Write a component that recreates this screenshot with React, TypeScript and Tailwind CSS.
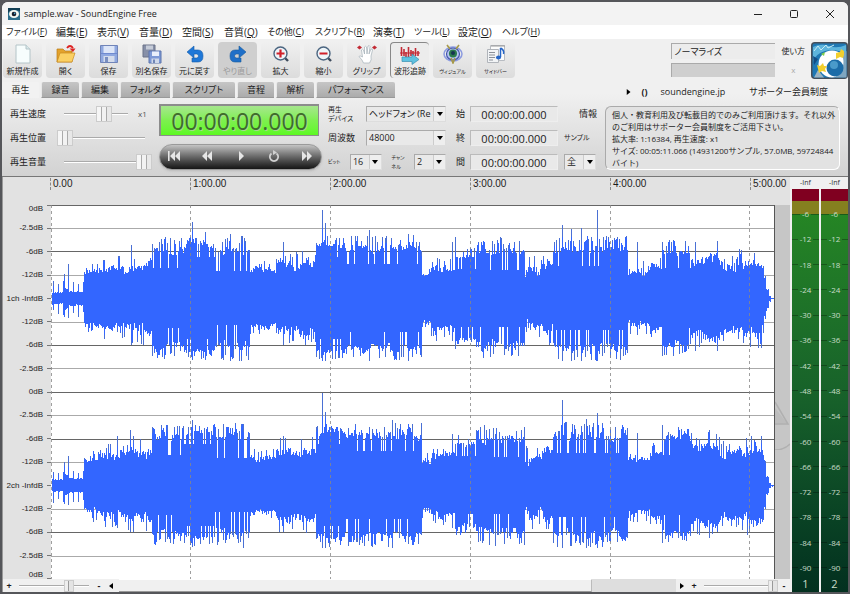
import React from "react";
import clsx from "clsx";

const menus = [
  { text: "ファイル", hotkey: "F", width: "w-[50px]", kana: true },
  { text: "編集", hotkey: "E", width: "w-[41px]" },
  { text: "表示", hotkey: "V", width: "w-[42px]" },
  { text: "音量", hotkey: "D", width: "w-[43px]" },
  { text: "空間", hotkey: "S", width: "w-[42px]" },
  { text: "音質", hotkey: "Q", width: "w-[43px]" },
  { text: "その他", hotkey: "C", width: "w-[48px]", kana: true },
  { text: "スクリプト", hotkey: "R", width: "w-[58px]", kana: true },
  { text: "演奏", hotkey: "T", width: "w-[41px]" },
  { text: "ツール", hotkey: "L", width: "w-[44px]", kana: true },
  { text: "設定", hotkey: "O", width: "w-[44px]" },
  { text: "ヘルプ", hotkey: "H", width: "w-[44px]", kana: true },
];

const tabs = [
  { text: "再生", width: "w-[37px]" },
  { text: "録音", width: "w-[38px]" },
  { text: "編集", width: "w-[37px]" },
  { text: "フォルダ", width: "w-[50px]" },
  { text: "スクリプト", width: "w-[63px]" },
  { text: "音程", width: "w-[37px]" },
  { text: "解析", width: "w-[38px]" },
  { text: "パフォーマンス", width: "w-[79px]" },
];

const tools = [
  { text: "新規作成", icon: <NewIcon /> },
  { text: "開く", icon: <OpenIcon /> },
  { text: "保存", icon: <SaveIcon /> },
  { text: "別名保存", icon: <SaveAsIcon /> },
  { text: "元に戻す", icon: <UndoIcon /> },
  { text: "やり直し", icon: <RedoIcon />, disabled: true },
  { text: "拡大", icon: <ZoomIcon plus /> },
  { text: "縮小", icon: <ZoomIcon /> },
  { text: "グリップ", icon: <GripIcon /> },
  { text: "波形追跡", icon: <TrackIcon />, pressed: true },
  { text: "ヴィジュアル", icon: <VisualIcon />, small: true },
  { text: "サイドバー", icon: <SidebarIcon />, small: true },
];

const axisLabels = [
  "0dB", "-2.5dB", "-6dB", "-12dB", "1ch -InfdB", "-12dB", "-6dB", "-2.5dB",
  "0dB", "-2.5dB", "-6dB", "-12dB", "2ch -InfdB", "-12dB", "-6dB", "-2.5dB", "0dB",
];

const rulerLabels = ["0.00", "1:00.00", "2:00.00", "3:00.00", "4:00.00", "5:00.00"];

const meterLabels = [-6, -12, -18, -24, -30, -36, -42, -48, -54, -60, -66, -72, -78, -84, -90];

function App() {
  return (
    <div className="h-screen bg-[#55565a] px-0.5 pt-0.5 pb-0.5 text-[#1c1c1c] font-['Open_Sans','Noto_Sans_CJK_JP',sans-serif] [font-feature-settings:'palt']">
      <div className="flex h-full flex-col overflow-hidden rounded-t-md bg-[#f0f0f0]">
        <TitleBar />
        <MenuBar />
        <div className="bg-linear-to-b from-[#f0f0f0] from-40% to-[#d2d2d2]">
          <Toolbar />
          <TabBar />
          <PlaybackPanel />
        </div>
        <div className="flex min-h-0 flex-1 border-t border-[#777]">
          <div className="flex min-w-0 flex-1 flex-col border-l border-[#999]">
            <Editor />
            <BottomBar />
          </div>
          <Meters />
        </div>
      </div>
    </div>
  );
}

export default App;

function TitleBar() {
  return (
    <header className="flex h-[23px] shrink-0 items-center bg-[#f3f3f3] pl-1.5">
      <svg viewBox="0 0 12 12" className="size-3">
        <rect width="12" height="12" fill="#2b6f8c" />
        <path d="M0 0h12v3L9 2 3 2 0 5z" fill="#123f55" />
        <ellipse cx="6" cy="6" rx="5" ry="4" fill="#f4f8f2" />
        <circle cx="6" cy="6" r="2.3" fill="#16202c" />
        <circle cx="6.6" cy="5.4" r="0.8" fill="#4aa3d0" />
      </svg>
      <h1 className="ml-1 text-[9px] whitespace-nowrap">sample.wav - SoundEngine Free</h1>
      <div className="ml-auto flex items-center">
        <button aria-label="最小化" className="flex h-5 w-9 items-center justify-center">
          <svg viewBox="0 0 10 10" className="size-2.5">
            <path d="M1 5.5h8" stroke="#222" />
          </svg>
        </button>
        <button aria-label="最大化" className="flex h-5 w-9 items-center justify-center">
          <svg viewBox="0 0 10 10" className="size-2.5">
            <rect x="1.5" y="1.5" width="7" height="7" rx="1" fill="none" stroke="#222" />
          </svg>
        </button>
        <button aria-label="閉じる" className="flex h-5 w-9 items-center justify-center">
          <svg viewBox="0 0 10 10" className="size-2.5">
            <path d="M1 1l8 8M9 1L1 9" stroke="#222" />
          </svg>
        </button>
      </div>
    </header>
  );
}

function MenuBar() {
  return (
    <nav className="flex h-3.5 shrink-0 items-center bg-white pl-1">
      {menus.map((menu) => (
        <button
          key={menu.text}
          className={clsx("text-left leading-3 whitespace-nowrap", menu.kana ? "text-[9px]" : "text-[10px]", menu.width)}
        >
          {menu.text}(<span className="underline">{menu.hotkey}</span>)
        </button>
      ))}
    </nav>
  );
}

function Toolbar() {
  return (
    <div className="flex h-[42px] items-center gap-1 pl-px">
      {tools.map((tool) => (
        <button
          key={tool.text}
          disabled={tool.disabled}
          className={clsx(
            "flex h-9 w-[39px] shrink-0 flex-col items-center justify-between rounded-sm pt-0.5 pb-px",
            tool.disabled && "bg-[#cfcfcf] text-[#999]",
            tool.pressed && "border-t border-l border-[#888] bg-[#ececec]",
            !tool.disabled && !tool.pressed && "bg-linear-to-b from-[#f0f0f0] to-[#dcdcdc]"
          )}
        >
          {tool.icon}
          <span className={clsx("leading-3 whitespace-nowrap", tool.small ? "text-[5px]" : "text-[8px]")}>{tool.text}</span>
        </button>
      ))}
      <div className="ml-auto flex items-center gap-1.5">
        <div className="flex flex-col gap-1">
          <input
            aria-label="処理"
            defaultValue="ノーマライズ"
            className="h-4 w-[104px] border-t border-l border-[#aaa] bg-[#ececec] pl-0.5 text-[9px]"
          />
          <div className="h-3.5 w-[104px] border-t border-l border-[#aaa] bg-[#cfcfcf]" />
        </div>
        <div className="flex flex-col items-center gap-1 text-[8px]">
          <button className="h-4 leading-4">使い方</button>
          <button className="h-3.5 leading-3 text-[#aaa]">x</button>
        </div>
        <Logo />
      </div>
    </div>
  );
}

function TabBar() {
  return (
    <div className="flex h-[17px] items-end">
      <div role="tablist" className="flex gap-0.5">
        {tabs.map((tab, i) => (
          <button
            key={tab.text}
            role="tab"
            aria-selected={i === 0}
            className={clsx(
              "flex h-4 items-center justify-center rounded-t-xs text-[9px] leading-3 whitespace-nowrap",
              tab.width,
              i === 0
                ? "bg-[#f2f2f2]"
                : "border-b border-l border-b-[#999] border-l-[#e8e8e8] bg-linear-to-b from-[#c6c6c6] to-[#ababab]"
            )}
          >
            {tab.text}
          </button>
        ))}
      </div>
      <div className="ml-auto flex items-center pr-5">
        <button aria-label="再生" className="mr-1 flex size-2 items-center justify-center">
          <svg viewBox="0 0 6 8" className="h-1.5">
            <path d="M1 0l5 4-5 4z" />
          </svg>
        </button>
        <button className="w-4 text-[9px] leading-3 font-bold">()</button>
        <a href="#soundengine" className="ml-2 text-[9px] leading-3">
          soundengine.jp
        </a>
        <a href="#supporter" className="ml-6 text-[9px] leading-3">
          サポーター会員制度
        </a>
      </div>
    </div>
  );
}

function PlaybackPanel() {
  return (
    <section className="flex h-[78px] gap-1.5 pt-1 pr-2 pl-2">
      <div className="flex w-[143px] shrink-0 flex-col text-[9px]">
        <div className="flex h-6 items-center">
          <label htmlFor="speed" className="w-[54px]">再生速度</label>
          <Slider id="speed" value={67} className="w-16" />
          <span className="ml-2.5 text-[8px] text-[#555]">x1</span>
        </div>
        <div className="flex h-6 items-center">
          <label htmlFor="position" className="w-[47px]">再生位置</label>
          <Slider id="position" value={0} className="w-[88px]" />
        </div>
        <div className="flex h-6 items-center">
          <label htmlFor="volume" className="w-[54px]">再生音量</label>
          <Slider id="volume" value={100} className="w-[88px]" />
        </div>
      </div>

      <div className="flex w-[163px] shrink-0 flex-col gap-2 pt-0.5">
        <output className="flex h-8 w-40 items-center justify-center border border-t-2 border-l-2 border-[#8c8c8c] bg-linear-to-b from-[#a6e68c] via-[#7df04e] to-[#5cf91f] text-[23px] leading-8 text-[#3f6b2b] [text-shadow:1px_1px_0_#a5d98d]">
          00:00:00.000
        </output>
        <Transport />
      </div>

      <div className="flex w-[118px] shrink-0 flex-col text-[9px]">
        <div className="flex h-6 items-center justify-between">
          <label htmlFor="device" className="text-[7px] leading-[9px]">
            再生
            <br />
            デバイス
          </label>
          <Select id="device" className="w-20" options={["ヘッドフォン (Re"]} />
        </div>
        <div className="flex h-6 items-center justify-between">
          <label htmlFor="rate">周波数</label>
          <Select id="rate" className="w-20" options={["48000", "44100"]} />
        </div>
        <div className="flex h-6 items-center justify-between">
          <label htmlFor="bits" className="text-[5px]">ビット</label>
          <Select id="bits" className="w-8" options={["16", "24"]} />
          <label htmlFor="channels" className="text-[5px] leading-[9px]">
            チャン
            <br />
            ネル
          </label>
          <Select id="channels" className="w-8" options={["2", "1"]} />
        </div>
      </div>

      <div className="ml-1 flex w-[102px] shrink-0 flex-col text-[9px]">
        {["始", "終", "間"].map((text) => (
          <label key={text} className="flex h-6 items-center justify-between">
            {text}
            <input
              defaultValue="00:00:00.000"
              className="h-4 w-[88px] border border-[#bbb] border-r-[#eee] border-b-[#eee] bg-[#e9e9e9] text-center text-[11px] leading-3"
            />
          </label>
        ))}
      </div>

      <div className="flex w-[33px] shrink-0 flex-col text-[9px]">
        <div className="flex h-6 items-center justify-end">情報</div>
        <label htmlFor="unit" className="flex h-6 items-center text-[7px]">サンプル</label>
        <div className="flex h-6 items-center">
          <Select id="unit" className="w-8" options={["全"]} />
        </div>
      </div>

      <div className="my-1 mb-1.5 ml-0.5 min-w-0 flex-1 overflow-hidden rounded-md border border-[#aaa] border-r-white border-b-white bg-[#e2e2e2] pt-0.5 pr-0.5 pl-1.5 text-[8px] leading-[12px] [font-feature-settings:normal]">
        <p>
          個人・教育利用及び転載目的でのみご利用頂けます。それ以外
          <br />
          のご利用はサポーター会員制度をご活用下さい。
        </p>
        <p>拡大率: 1:16384, 再生速度: x1</p>
        <p>
          サイズ: 00:05:11.066 (14931200サンプル, 57.0MB, 59724844
          <br />
          バイト)
        </p>
      </div>
    </section>
  );
}

type TSlider = { id?: string; label?: string; value: number; className: string; thin?: boolean };

function Slider({ id, label, value, className, thin }: TSlider) {
  return (
    <input
      id={id}
      aria-label={label}
      type="range"
      defaultValue={value}
      className={clsx(
        "h-4 shrink-0 appearance-none bg-transparent",
        "[&::-webkit-slider-runnable-track]:h-0.5 [&::-webkit-slider-runnable-track]:border-t [&::-webkit-slider-runnable-track]:border-[#aaa] [&::-webkit-slider-runnable-track]:bg-white",
        "[&::-webkit-slider-thumb]:appearance-none [&::-webkit-slider-thumb]:border [&::-webkit-slider-thumb]:border-[#ccc]",
        thin
          ? "[&::-webkit-slider-thumb]:-mt-1.5 [&::-webkit-slider-thumb]:h-3 [&::-webkit-slider-thumb]:w-2.5 [&::-webkit-slider-thumb]:bg-[linear-gradient(90deg,#eee_40%,#999_40%,#999_55%,#e4e4e4_55%)]"
          : "[&::-webkit-slider-thumb]:-mt-2 [&::-webkit-slider-thumb]:h-4 [&::-webkit-slider-thumb]:w-4 [&::-webkit-slider-thumb]:bg-[linear-gradient(90deg,#f6f6f6_30%,#aaa_30%,#aaa_38%,#f2f2f2_38%,#f2f2f2_62%,#aaa_62%,#aaa_70%,#e8e8e8_70%)]",
        className
      )}
    />
  );
}

type TSelect = { id: string; className: string; options: string[] };

function Select({ id, className, options }: TSelect) {
  return (
    <span className={clsx("grid h-4 border border-[#aaa] border-r-[#ddd] border-b-[#ddd] bg-[#e9e9e9]", className)}>
      <select id={id} className="min-w-0 appearance-none overflow-hidden pr-2.5 pl-0.5 text-[9px] leading-3 [grid-area:1/1]">
        {options.map((option) => (
          <option key={option}>{option}</option>
        ))}
      </select>
      <span className="pointer-events-none flex w-3 items-center justify-center justify-self-end border-l border-[#ccc] bg-[#eee] [grid-area:1/1]">
        <svg viewBox="0 0 6 4" className="h-1 w-1.5">
          <path d="M0 0h6L3 4z" />
        </svg>
      </span>
    </span>
  );
}

function Transport() {
  return (
    <div className="flex h-[26px] items-center justify-between rounded-full border border-[#9a9a9a] bg-linear-to-b from-[#c4c4c4] via-[#666] to-[#161616] px-2 pb-0.5 shadow-sm">
      <button aria-label="先頭へ">
        <svg viewBox="0 0 12 10" className="h-2.5 w-3 fill-[#e6e6e6]">
          <path d="M0 0h1.6v10H0zM7 0v10L2 5zM12 0v10L7 5z" />
        </svg>
      </button>
      <button aria-label="巻き戻し">
        <svg viewBox="0 0 12 10" className="h-2.5 w-3 fill-[#e6e6e6]">
          <path d="M6 0v10L1 5zM11 0v10L6 5z" />
        </svg>
      </button>
      <button aria-label="再生">
        <svg viewBox="0 0 12 10" className="h-2.5 w-3 fill-[#e6e6e6]">
          <path d="M4 0l5 5-5 5z" />
        </svg>
      </button>
      <button aria-label="ループ">
        <svg viewBox="0 0 12 12" className="size-3 fill-none stroke-[#d0d0d0]">
          <path d="M3.5 3.5a4.2 4.2 0 1 0 5 0" strokeWidth="1.8" />
          <path d="M5 0l4 2.5L5 5z" fill="#d0d0d0" stroke="none" />
        </svg>
      </button>
      <button aria-label="早送り">
        <svg viewBox="0 0 12 10" className="h-2.5 w-3 fill-[#e6e6e6]">
          <path d="M1 0l5 5-5 5zM6 0l5 5-5 5z" />
        </svg>
      </button>
    </div>
  );
}

function Editor() {
  return (
    <div className="flex min-h-0 flex-1 flex-col bg-[#e2e2e2] font-['Liberation_Sans',sans-serif]">
      <div className="flex h-7 shrink-0 pt-px pr-4 pl-[47px]">
        <div className="grid min-w-0 flex-1 grid-cols-[140fr_140fr_140fr_140fr_140fr_24fr]">
          {rulerLabels.map((text) => (
            <span key={text} className="h-3 min-w-0 border-l border-dashed border-[#888] pl-0.5 text-[10px] leading-3 whitespace-nowrap">
              {text}
            </span>
          ))}
        </div>
      </div>
      <div className="flex min-h-0 flex-1">
        <div className="flex w-12 shrink-0 flex-col justify-between text-[8px] leading-[8px]">
          {axisLabels.map((text, i) => (
            <div
              key={i}
              className={clsx(
                "flex h-0 justify-end gap-1",
                i === 0 ? "items-start" : i === axisLabels.length - 1 ? "items-end" : "items-center"
              )}
            >
              <span className="whitespace-nowrap">{text}</span>
              <i className="h-px w-1 bg-[#777]" />
            </div>
          ))}
        </div>
        <div className="min-w-0 flex-1 border-r border-[#555] bg-white">
          <Waveform />
        </div>
        <div className="flex w-[15px] shrink-0 flex-col justify-center bg-[#c6c6c6]">
          <svg viewBox="0 0 15 60" className="mt-14 w-full fill-none">
            <path d="M0 18L12 33 0 35z" fill="#bcbcbc" />
            <path d="M0 12L13 34H0M15 54Q9 60 0 60" stroke="#b0b0b0" strokeWidth="1.500" />
          </svg>
        </div>
      </div>
    </div>
  );
}

// start column, low and high level of each passage; passages run up to the next start
const passages = [
  [1, 5, 18],
  [14, 9, 26],
  [17, 6, 19],
  [33, 21, 36],
  [50, 23, 42],
  [74, 23, 46],
  [97, 28, 48],
  [101, 34, 60],
  [133, 44, 61],
  [164, 32, 62],
  [199, 22, 36],
  [225, 24, 46],
  [252, 26, 48],
  [265, 44, 62],
  [294, 38, 62],
  [371, 20, 33],
  [380, 23, 42],
  [404, 32, 50],
  [425, 33, 60],
  [474, 15, 42],
  [492, 22, 48],
  [502, 36, 62],
  [577, 20, 36],
  [599, 27, 42],
  [611, 34, 57],
  [640, 30, 52],
  [669, 22, 46],
  [680, 25, 48],
  [713, 15, 28],
  [715, 7, 12],
  [718, 2, 4],
  [720, 0, 1],
];

const peaks: Record<number, number>[] = [
  { 13: 25, 17: 35, 80: 54, 113: 60, 141: 77, 154: 67, 179: 65, 190: 63, 232: 57, 271: 89, 274: 76, 318: 69, 357: 65, 401: 57, 404: 62, 511: 74, 520: 70, 530: 71, 546: 89, 586: 57, 611: 57, 622: 59, 644: 57, 666: 58 },
  { 13: 24, 17: 30, 66: 50, 79: 56, 82: 50, 141: 66, 192: 62, 232: 50, 271: 93, 274: 74, 341: 66, 401: 52, 511: 86, 535: 67, 546: 73, 586: 53, 611: 61, 658: 56 },
];

function makeWave(seed: number, spikes: Record<number, number>) {
  let s = seed;
  const rand = () => {
    s = (s * 1664525 + 1013904223) % 4294967296;
    return s / 4294967296;
  };
  const up: number[] = [];
  const down: number[] = [];
  let p = 0;
  let swell = 0.5;
  for (let x = 0; x < 723; x++) {
    while (p < passages.length - 1 && x >= passages[p + 1][0]) p++;
    if (x % 3 === 0) swell = swell * 0.4 + rand() * 0.6;
    const [, lo, hi] = passages[p];
    const level = () => {
      const r = rand();
      let k = r * 0.45 + swell * 0.4;
      if (x < 33) k = x % 5 === 2 ? 0.5 + r * 0.5 : r * 0.15;
      else if (lo > 30) k = r < 0.14 ? -0.15 : r > 0.7 ? 0.75 + rand() * 0.3 : k + 0.15;
      else if (r > 0.82) k = 0.6 + rand() * 0.5;
      return Math.max(lo + (hi - lo) * k, 0.5);
    };
    up.push(spikes[x] ?? level());
    down.push(spikes[x] ? Math.min(spikes[x], hi) : level() * 0.98);
  }
  return { up, down };
}

// outline of a bar chart that grows up and down from the middle line
function outline(mid: number, up: number[], down: number[]) {
  let d = `M1 ${mid}`;
  for (let x = 1; x < up.length; x++) d += `V${Math.round(mid - up[x])}H${x + 1}`;
  for (let x = up.length - 1; x >= 1; x--) d += `V${Math.round(mid + down[x])}H${x}`;
  return d + "Z";
}

function wavePaths(mid: number, seed: number, spikes: Record<number, number>) {
  const { up, down } = makeWave(seed, spikes);
  // solid part stays near the neighbours' level, the rest of a column is drawn as a thin tip
  const body = (list: number[]) =>
    list.map((v, x) => Math.min(v, ((list[x - 1] ?? 0) + v + (list[x + 1] ?? 0)) / 3 + 3));
  return { tips: outline(mid, up, down), solid: outline(mid, body(up), body(down)) };
}

const channels = [wavePaths(93.5, 11, peaks[0]), wavePaths(280.5, 57, peaks[1])];

function Waveform() {
  return (
    <svg viewBox="0 0 723 374" preserveAspectRatio="none" className="block h-full w-full" shapeRendering="crispEdges">
      {axisLabels.map((text, i) => {
        if (text.includes("ch") || i === 16) return null;
        const strong = text === "0dB" || text === "-6dB";
        return <path key={i} d={`M0 ${Math.floor(i * 23.4) + 0.5}H724`} stroke={strong ? "#666" : "#aaa"} />;
      })}
      {channels.map((channel, i) => (
        <g key={i}>
          <path d={channel.tips} fill="#4a70d4" />
          <path d={channel.solid} fill="#3366ff" />
        </g>
      ))}
      {[0, 139, 279, 419, 559, 698].map((x) => (
        <path key={x} d={`M${x + 0.5} 0V374`} stroke="#888" strokeDasharray="3 3" opacity="0.8" />
      ))}
    </svg>
  );
}

function BottomBar() {
  return (
    <div className="flex h-[13px] shrink-0 items-center bg-[#f0f0f0] text-[9px] leading-3">
      <button className="w-3 font-bold">+</button>
      <Slider label="縦の拡大" value={75} thin className="ml-1 w-[70px]" />
      <button className="ml-1 w-3 font-bold">-</button>
      <button aria-label="左へ" className="flex w-3 justify-center">
        <svg viewBox="0 0 4 6" className="h-1.5 w-1">
          <path d="M4 0v6L0 3z" />
        </svg>
      </button>
      <div className="ml-0.5 flex h-full flex-1 bg-[#dedede]">
        <div className="w-[85%] border-t border-r border-b border-t-white border-r-[#bbb] border-b-[#999] bg-[#f0f0f0]" />
      </div>
      <button aria-label="右へ" className="flex w-3 justify-center">
        <svg viewBox="0 0 4 6" className="h-1.5 w-1">
          <path d="M0 0v6l4-3z" />
        </svg>
      </button>
      <button className="w-3 font-bold">+</button>
      <Slider label="横の拡大" value={100} thin className="ml-1 w-[74px]" />
      <button className="w-3 font-bold">-</button>
    </div>
  );
}

function Meters() {
  return (
    <aside className="flex shrink-0 gap-0.5 bg-[#f0f0f0] pl-0.5">
      {[1, 2].map((channel) => (
        <div key={channel} className="flex w-[27px] flex-col text-center text-[8px] text-[#c8dcc8]">
          <span className="h-3 text-[7px] leading-3 text-[#333]">-Inf</span>
          <div className="h-3 bg-[#800020]" />
          <div className="h-[13px] bg-[#85801f]" />
          <div className="flex min-h-0 flex-1 flex-col bg-linear-to-b from-[#258524] via-[#17602a] to-[#03301f]">
            <div className="flex flex-1 flex-col justify-between">
              {meterLabels.map((db) => (
                <div key={db} className="flex h-0 items-center gap-0.5">
                  <i className="h-px flex-1 bg-black/30" />
                  <span>{db}</span>
                  <i className="h-px flex-1 bg-black/30" />
                </div>
              ))}
            </div>
            <span className="flex h-6 items-end justify-center text-[11px] leading-4">{channel}</span>
          </div>
        </div>
      ))}
    </aside>
  );
}

function Logo() {
  return (
    <svg viewBox="0 0 37 37" className="size-[37px]">
      <rect x="0.75" y="0.75" width="35.5" height="35.5" rx="3" fill="#1f78b4" stroke="#45505c" strokeWidth="1.5" />
      <path d="M2 5Q10 1 18 4T35 3V12Q24 6 14 9T2 20z" fill="#5db4dc" />
      <path d="M3 9l4-5 3 4 5-5 2 3 6-3" stroke="#c8ecf5" fill="none" />
      <path d="M2 14l5 3-4 6z" fill="#124d85" />
      <circle cx="21" cy="22" r="13.500" fill="#fff" />
      <path d="M35.500 9v26.500H24Q36 26 31 12z" fill="#7fa6c0" />
      <path d="M7 28l6 7.500H3z" fill="#9ab4c4" />
      <circle cx="24" cy="26" r="8.500" fill="#1c6ca8" />
      <circle cx="23" cy="23" r="4" fill="#4a9aca" />
      <path d="M25 11l4-1 1-3 3 2v4l-1 3-3-1-4 2z" fill="#f2cf2e" />
      <path d="M6 23l3 1 3-3 1 3 3 0-2 3 1 3-4-1-3 2-1-4z" fill="#f2cf2e" />
      <path d="M10 12l4-2-1 4z" fill="#7fd04d" />
    </svg>
  );
}

function NewIcon() {
  return (
    <svg viewBox="0 0 20 20" className="size-5">
      <path d="M3 1h10l4 4v14H3z" fill="#f7fdfd" stroke="#b4c4c8" />
      <path d="M13 1v4h4" fill="#d8e8ea" stroke="#b4c4c8" />
    </svg>
  );
}

function OpenIcon() {
  return (
    <svg viewBox="0 0 20 20" className="size-5">
      <path d="M1 5h6l2 2h7v11H1z" fill="#e3a22c" stroke="#b97b18" strokeWidth="0.7" />
      <path d="M4 9h15l-3 9H1z" fill="#fbd063" stroke="#c98b20" strokeWidth="0.7" />
      <path d="M11 4Q14 0 17 4" fill="none" stroke="#d22" strokeWidth="1.8" />
      <path d="M13.500 4.500h6L17 8z" fill="#d22" />
    </svg>
  );
}

function SaveIcon() {
  return (
    <svg viewBox="0 0 20 20" className="size-5">
      <path d="M1.500 1.500h17v17h-17z" fill="#8fa8e0" stroke="#7084b8" />
      <path d="M4.500 2h11v7h-11z" fill="#dde6f8" />
      <path d="M2 9.500h16" stroke="#6f8ad0" />
      <path d="M4.500 12h11v6h-11z" fill="#d4dcec" />
      <path d="M6 13h3v5H6z" fill="#7a8fc0" />
    </svg>
  );
}

function SaveAsIcon() {
  return (
    <svg viewBox="0 0 20 20" className="size-5">
      <path d="M1 1h12v12H1z" fill="#8790a8" stroke="#6b7388" />
      <path d="M4 1.500h7v4H4z" fill="#c6ccd8" />
      <path d="M7 7h12v12H7z" fill="#7d99d6" stroke="#5c74ac" />
      <path d="M10 7.500h7V12h-7z" fill="#e9effb" />
      <path d="M9.500 14.500h7.500V19H9.500z" fill="#cfd8ea" />
      <path d="M11 15.500h2V19h-2z" fill="#7186b5" />
    </svg>
  );
}

function UndoIcon() {
  return (
    <svg viewBox="0 0 20 20" className="size-5">
      <path d="M2 8L9 2v4h4q5 0 5 6t-5 6H7v-4h4.500q2 0 2-2T11.500 10H9v4z" fill="#1f78d8" stroke="#145aa8" strokeWidth="0.6" />
    </svg>
  );
}

function RedoIcon() {
  return (
    <svg viewBox="0 0 20 20" className="size-5">
      <path d="M18 8L11 2v4H7q-5 0-5 6t5 6h6v-4H8.500q-2 0-2-2T8.500 10H11v4z" fill="#1f6fc8" stroke="#1a5a9c" strokeWidth="0.6" />
    </svg>
  );
}

function ZoomIcon({ plus }: { plus?: boolean }) {
  return (
    <svg viewBox="0 0 20 20" className="size-5 fill-none">
      <path d="M13.500 13.500L17 17" stroke="#3d4a5c" strokeWidth="2.400" />
      <circle cx="9.500" cy="9.500" r="6.500" fill="#eef5f9" stroke="#4b6580" strokeWidth="1.400" />
      <path d={plus ? "M5.500 9.500h8M9.500 5.500v8" : "M5.500 9.500h8"} stroke="#d0202a" strokeWidth="2.200" />
    </svg>
  );
}

function GripIcon() {
  return (
    <svg viewBox="0 0 20 20" className="size-5">
      <path
        d="M6.500 19q-1-3-4.500-6.500Q2.500 11 5.500 13L4.500 6q1-1.500 2 0l1 4V3q1-1.500 2 0l.5 7 1-8q1.500-1 2 .5L12 10l2-5q1.500-.5 1.500 1L14 12q1 4-1.500 7z"
        fill="#fff"
        stroke="#a4b0b8"
        strokeWidth="0.700"
      />
      <path d="M0 3.500l2.500-2 2.500 2-2.500 2zM15 3.500l2.500-2 2.500 2-2.500 2z" fill="#c22b35" />
    </svg>
  );
}

function TrackIcon() {
  return (
    <svg viewBox="0 0 22 20" className="h-5 w-[22px] fill-none">
      <path d="M1 8h20" stroke="#c22a35" />
      <path d="M2.500 2v9M5 4v7M7 7v5M9.500 2v10M12 5v6M14 6v5M16.500 3v8M19 6v5" stroke="#c22a35" strokeWidth="1.600" />
      <path d="M3 12h10V9l7 5.500-7 5v-3H3z" fill="#5fc2e0" stroke="#3a8fb0" strokeWidth="0.700" />
    </svg>
  );
}

function VisualIcon() {
  return (
    <svg viewBox="0 0 20 20" className="size-5 fill-none">
      <ellipse cx="10" cy="10" rx="9" ry="7" stroke="#8c9be0" strokeWidth="1.500" />
      <ellipse cx="10" cy="10" rx="6.500" ry="6" fill="#b4c4ee" stroke="#4456b0" strokeWidth="1.200" />
      <circle cx="10" cy="9.500" r="4" fill="#2c7a4c" />
      <circle cx="10" cy="9" r="2" fill="#173352" />
      <path d="M4 1l3 4M16 1l-3 4M8 14l2 5 2-5" stroke="#a89a48" strokeWidth="1.600" />
    </svg>
  );
}

function SidebarIcon() {
  return (
    <svg viewBox="0 0 20 20" className="size-5 fill-none">
      <path d="M4.500 1.500h14v15h-14z" fill="#fcfcfc" stroke="#b8bcc2" />
      <path d="M1.500 5.500h11v13h-11z" fill="#f2f4f6" stroke="#b0b4ba" />
      <path d="M5 2h14" stroke="#999" />
      <path d="M3 8.500h6M3 11h6M3 13.500h6M3 16h4" stroke="#8a8f98" />
      <path d="M14.500 4v9M14.500 4q4 2 3 6" stroke="#2766c8" strokeWidth="1.500" />
      <ellipse cx="12.500" cy="13.500" rx="2.500" ry="2" fill="#2766c8" />
    </svg>
  );
}
